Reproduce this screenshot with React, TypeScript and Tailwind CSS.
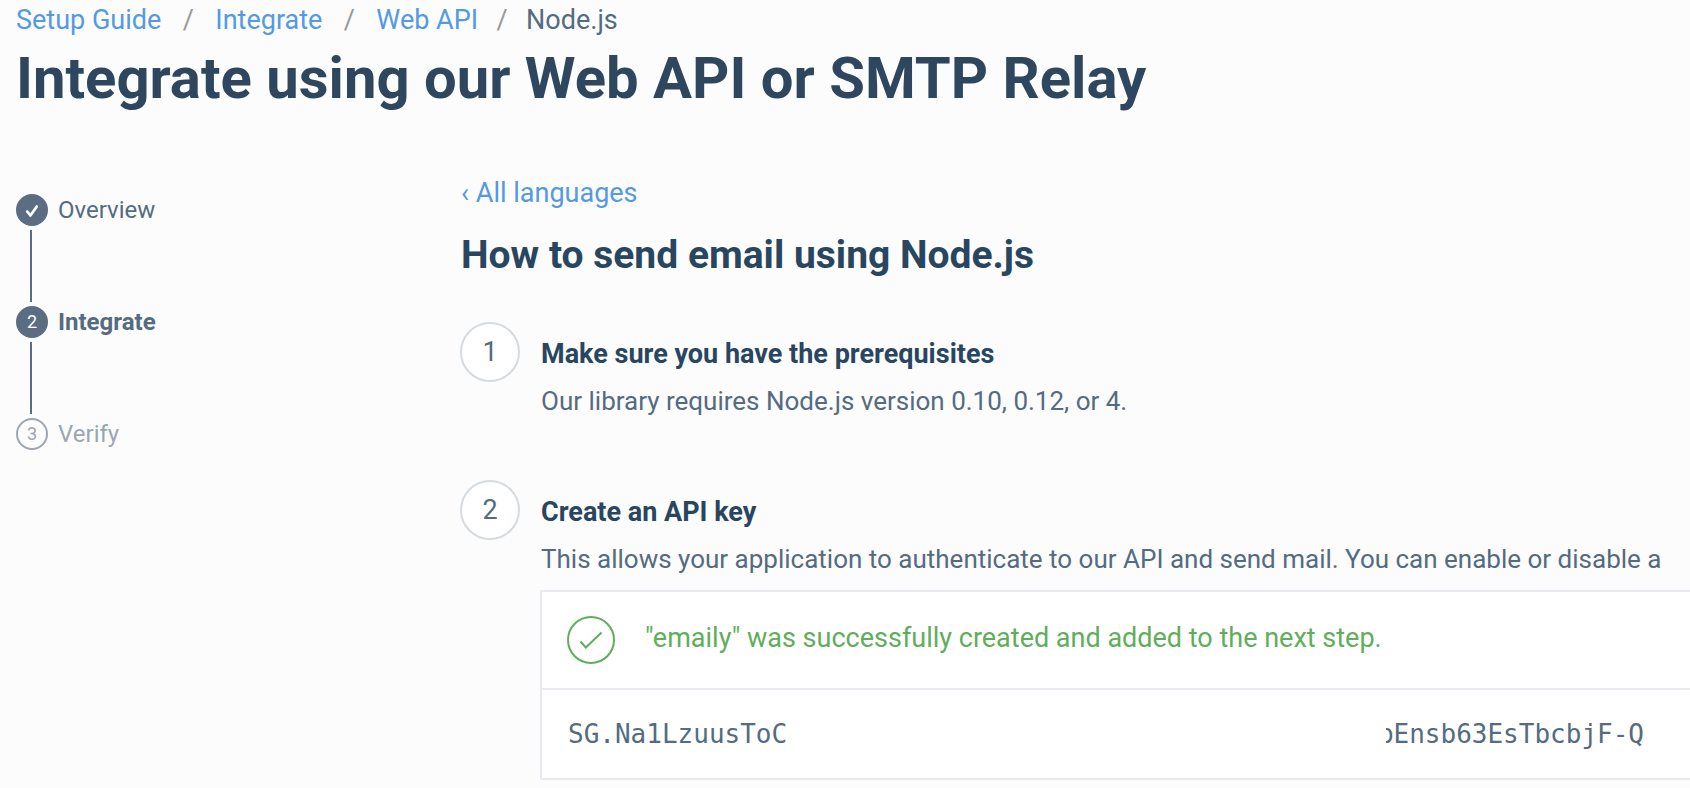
import React from "react";

const crumbs = ["Setup Guide", "Integrate", "Web API"];

function Connector() {
  return <div className="my-1 ml-[14px] h-[72px] w-[2px] bg-[#5a6d82]" />;
}

function CheckBadge() {
  return (
    <svg viewBox="0 0 32 32" className="size-8 shrink-0" aria-hidden="true">
      <circle cx="16" cy="16" r="16" fill="#5a6d82" />
      <path d="M11.2 17.500l3.200 4L20.800 12.500" fill="none" stroke="#fff" strokeWidth="2.700" strokeLinecap="round" strokeLinejoin="round" />
    </svg>
  );
}

function SuccessIcon() {
  return (
    <svg viewBox="0 0 48 48" className="size-12 shrink-0" fill="none" stroke="#5fae5b" strokeWidth="2" aria-hidden="true">
      <circle cx="24" cy="24" r="23" />
      <path d="M13.500 25.500l5.300 6L34.500 16.500" />
    </svg>
  );
}

function Step({ number, title, text, children }: { number: number; title: string; text: string; children?: React.ReactNode }) {
  return (
    <li className="flex gap-5">
      <span className="flex size-[60px] shrink-0 items-center justify-center rounded-full border-2 border-[#d5dae0] bg-white text-[27px] leading-8 text-[#546b81]">
        {number}
      </span>
      <div className="min-w-0 flex-1 pt-4">
        <h3 className="pl-px text-[27px] leading-8 font-bold text-[#294661]">{title}</h3>
        <p className="mt-[15px] pl-px text-[26px] leading-8 whitespace-nowrap">{text}</p>
        {children}
      </div>
    </li>
  );
}

export default function App() {
  return (
    <div className="min-h-screen overflow-hidden bg-[#fcfcfc] pb-2 pl-4 font-['Roboto',sans-serif] text-[#546b81]">
      <nav aria-label="Breadcrumb" className="pt-1">
        <ol className="flex text-[27px] leading-8">
          {crumbs.map((c) => (
            <li key={c} className="group flex">
              <a href="#" className="text-[#5499e4]">{c}</a>
              <span className="w-[54px] text-center text-[#999] group-nth-3:w-12">/</span>
            </li>
          ))}
          <li aria-current="page">Node.js</li>
        </ol>
      </nav>
      <h1 className="mt-1 text-[58px] leading-[76px] font-bold whitespace-nowrap text-[#2e475f]">
        Integrate using our Web API or SMTP Relay
      </h1>

      <div className="mt-[61px] flex">
        <aside className="w-[444px] shrink-0 pt-[17px] text-[24px] leading-8">
          <div className="flex gap-[10px]"><CheckBadge /><a href="#">Overview</a></div>
          <Connector />
          <div className="flex gap-[10px]">
            <span className="flex size-8 items-center justify-center rounded-full bg-[#5a6d82] text-[18px] text-white">2</span>
            <a href="#" className="font-bold">Integrate</a>
          </div>
          <Connector />
          <div className="flex gap-[10px] text-[#9ba6b2]">
            <span className="flex size-8 items-center justify-center rounded-full border-2 border-[#9ba6b2] text-[18px]">3</span>
            <span>Verify</span>
          </div>
        </aside>

        <main className="min-w-0 flex-1">
          <a href="#" className="block pl-px text-[27px] leading-8 text-[#5499e4]">‹ All languages</a>
          <h2 className="mt-[22px] pl-px text-[39px] leading-12 font-bold whitespace-nowrap text-[#294661]">How to send email using Node.js</h2>
          <ol className="mt-[43px] flex flex-col gap-[63px]">
            <Step number={1} title="Make sure you have the prerequisites" text="Our library requires Node.js version 0.10, 0.12, or 4." />
            <Step number={2} title="Create an API key" text="This allows your application to authenticate to our API and send mail. You can enable or disable a">
              <div className="mt-[15px] border-y-2 border-l-2 border-[#e9eaef] bg-white">
                <div className="flex gap-[30px] border-b-2 border-[#e9eaef] px-[25px] py-6">
                  <SuccessIcon />
                  <p className="pt-[6px] text-[27px] leading-8 text-[#5fae5b]">"emaily" was successfully created and added to the next step.</p>
                </div>
                <div className="flex justify-between py-7 pr-[46px] pl-[26px] font-['DejaVu_Sans_Mono',monospace] text-[26px] leading-8 whitespace-nowrap">
                  <span>SG.Na1LzuusToC</span>
                  <span className="flex w-[258px] justify-end overflow-hidden">bEnsb63EsTbcbjF-Q</span>
                </div>
              </div>
            </Step>
          </ol>
        </main>
      </div>
    </div>
  );
}
